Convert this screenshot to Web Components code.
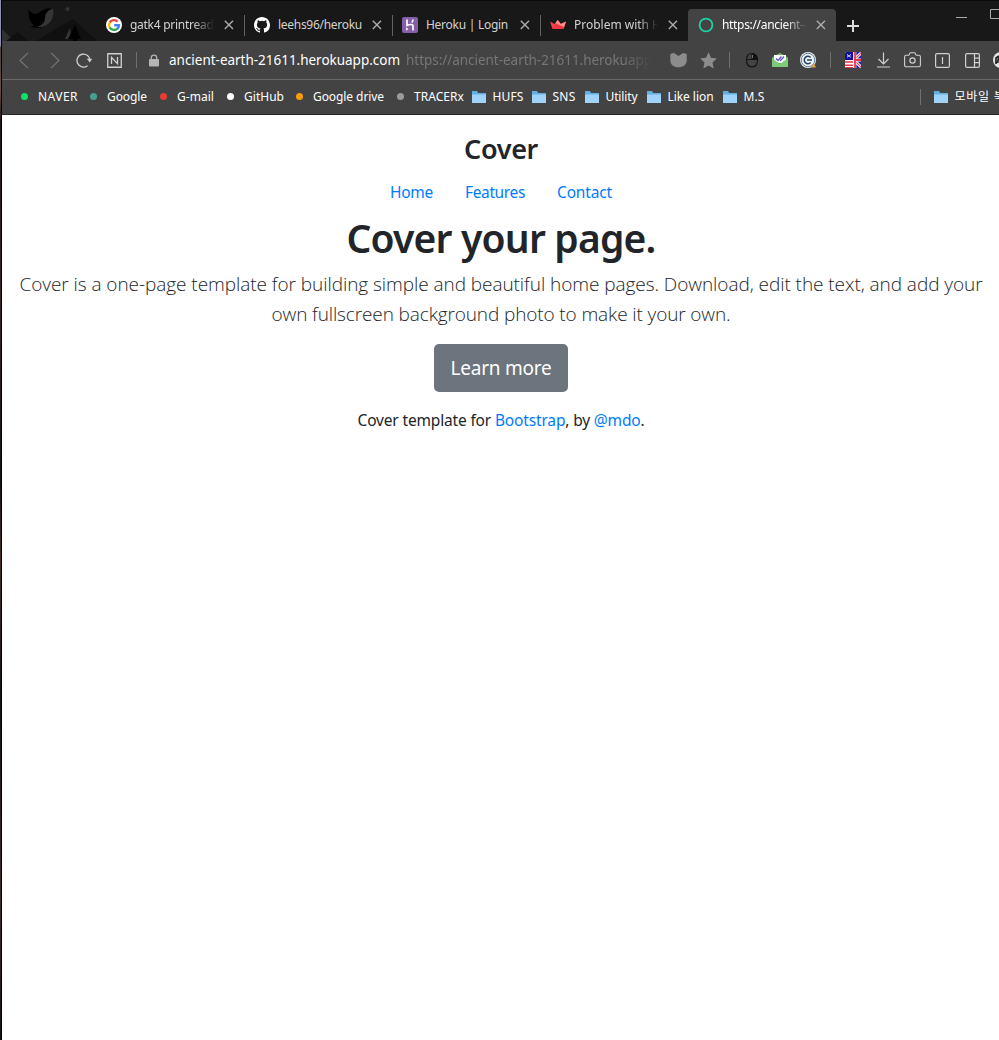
<!DOCTYPE html>
<html lang="en">
<head>
<meta charset="utf-8">
<title>Cover</title>
<style>
html,body{margin:0;height:100%;overflow:hidden;background:#fff}
body{font-family:"Noto Sans","Noto Sans CJK KR",sans-serif}
</style>
</head>
<body>
<browser-window></browser-window>
<script>
const def=(name,html,setup)=>customElements.define(name,class extends HTMLElement{
  connectedCallback(){
    if(this.shadowRoot)return;
    this.attachShadow({mode:'open'}).innerHTML=typeof html==='function'?html(this):html;
    if(setup)setup(this);
  }
});
const a=(el,n,d='')=>el.getAttribute(n)??d;

const icons={
google:[16,16,'<circle cx="8" cy="8" r="8" fill="#fff"/><g fill="none" stroke-width="2.4"><path d="M11.6 4.6A5 5 0 0 0 3.7 5.6" stroke="#ea4335"/><path d="M3.7 5.5a5 5 0 0 0 0 5" stroke="#fbbc05"/><path d="M3.7 10.4a5 5 0 0 0 7.7 1.3" stroke="#34a853"/><path d="M11.3 11.8A5 5 0 0 0 13 8.2H8.2" stroke="#4285f4"/></g>'],
github:[16,16,'<path fill="#fff" d="M8 0C3.58 0 0 3.58 0 8c0 3.54 2.29 6.53 5.47 7.59.4.07.55-.17.55-.38 0-.19-.01-.82-.01-1.49-2.01.37-2.53-.49-2.69-.94-.09-.23-.48-.94-.82-1.13-.28-.15-.68-.52-.01-.53.63-.01 1.08.58 1.23.82.72 1.21 1.87.87 2.33.66.07-.52.28-.87.51-1.07-1.78-.2-3.64-.89-3.64-3.95 0-.87.31-1.59.82-2.15-.08-.2-.36-1.02.08-2.12 0 0 .67-.21 2.2.82a7.6 7.6 0 0 1 4 0c1.53-1.04 2.2-.82 2.2-.82.44 1.1.16 1.92.08 2.12.51.56.82 1.27.82 2.15 0 3.07-1.87 3.75-3.65 3.95.29.25.54.73.54 1.48 0 1.07-.01 1.93-.01 2.2 0 .21.15.46.55.38A8.01 8.01 0 0 0 16 8c0-4.42-3.58-8-8-8z"/>'],
heroku:[16,16,'<rect width="16" height="16" rx="2" fill="#8560a8"/><path d="M5 2.6v5.8c2.2-1 6-1.6 6 .6v4.4M11 2.6c0 1.3-.5 2.2-1.3 3" fill="none" stroke="#fff" stroke-width="1.7"/><path d="M4.2 10.2 6.4 12l-2.2 1.8z" fill="#fff"/>'],
crown:[16,16,'<path d="M0 4.5 4.5 7 7.8 3l3 4L16 4.5 13.5 12H2.5z" fill="#f0434a"/><path d="m7.8 3 3 4L16 4.5 14 10.5 5.5 6z" fill="#ff8d88"/><path d="m5 7 9 3-.5 2H2.5z" fill="#ef3540"/>'],
ring:[16,16,'<circle cx="8" cy="8" r="6.4" fill="none" stroke="#1fd0a4" stroke-width="1.8"/>'],
close:[10,10,'<path d="m.8.8 8.2 8.2M9 .8.8 9" stroke="#adadad" stroke-width="1.4"/>'],
plus:[12,12,'<path d="M6 0v12M0 6h12" stroke="#dcdcdc" stroke-width="2"/>'],
min:[11,2,'<path d="M0 .5h11" stroke="#aaa"/>'],
max:[11,10,'<path d="M.5.5h10v9H.5z" fill="none" stroke="#aaa"/>'],
back:[10,17,'<path d="M9 .8 1 8.5 9 16.2" fill="none" stroke="#777" stroke-width="1.1"/>'],
fwd:[10,17,'<path d="m1 .8 8 7.7L1 16.2" fill="none" stroke="#777" stroke-width="1.1"/>'],
reload:[17,16,'<path d="M11.5 13.7A6.5 6.5 0 1 1 14 8.5" fill="none" stroke="#d0d0d0" stroke-width="1.3"/><path d="M10.800 6.800h5.400l-2.400 3.700z" fill="#d0d0d0"/>'],
naver:[15,15,'<path d="M.75.75h13.5v13.5H.75zM4.500 11V4.300l6 6.400V4" fill="none" stroke="#d0d0d0" stroke-width="1.3"/>'],
lock:[10,13,'<path d="M2.300 6V3.800a2.700 2.700 0 0 1 5.400 0V6" fill="none" stroke="#b4b4b4" stroke-width="1.3"/><rect y="5" width="10" height="7.500" rx="1" fill="#b4b4b4"/>'],
pocket:[17,15,'<path d="M.3 1 4 0l4.500 3L13 0l3.700 1v6.500c0 4-3.500 6.800-8.200 6.800S.3 11.500.3 7.500z" fill="#8c8c8c"/>'],
star:[17,17,'<path d="m8.500.3 2.500 5.500 5.800.7-4.300 4 1.200 5.900-5.200-3-5.200 3 1.200-5.900-4.300-4 5.800-.7z" fill="#8c8c8c"/>'],
mouse:[14,16,'<path d="M7 1.500C3.500 1.500 1.500 4 1.500 8s2 6.800 5.500 6.800 5.500-2.800 5.500-6.800S10.500 1.500 7 1.500zM1.500 7.500h11" fill="none" stroke="#151515" stroke-width="1.2"/><path d="M7 1.500c3.200 0 5.300 2.300 5.500 6H6.500v-6z" fill="#111"/><path d="M7.500 3v3" stroke="#777"/>'],
mail:[16,16,'<path d="M0 5.500 8 .7l8 4.800V15H0z" fill="#62b35e"/><path d="M2 3h12v8H2z" fill="#fff"/><path d="m0 6 8 6 8-6v7.500q0 1.500-1.500 1.500h-13Q0 15 0 13.500z" fill="#7dcb78"/><path d="m4 6.500 2 2 3.500-4M8 8l.7.500 3.300-4" fill="none" stroke="#5a50c8" stroke-width="1.2"/>'],
cext:[16,16,'<circle cx="8" cy="8" r="8" fill="#edf2f5"/><circle cx="8" cy="8" r="6.700" fill="none" stroke="#637f9c"/><path d="M10.700 5.500a3.700 3.700 0 1 0 0 5M7 8h5" fill="none" stroke="#25405f" stroke-width="1.500"/><path d="m11 14 3-3 2 4.500h-4z" fill="#d9a44c"/>'],
flag:[16,16,'<defs><clipPath id="r"><rect width="16" height="16" rx="1.500"/></clipPath></defs><g clip-path="url(#r)"><path fill="#fff" d="M0 0h16v16H0z"/><path d="M0 0h8.500v8H0z" fill="#10109c"/><path d="M0 10h8M0 13.200h8M0 15.800h8" stroke="#e8334a" stroke-width="1.500"/><path d="M9 0h7v16H9z" fill="#1e239f"/><path d="m9 8 8-8M9 8l8 8" stroke="#fff" stroke-width="3"/><path d="m9 8 8-8M9 8l8 8" stroke="#ef4660" stroke-width="1.200"/><path d="M8.500 8H16M9.800 0v16" stroke="#fff" stroke-width="3"/><path d="M9 8h7M10 0v16" stroke="#e8334a" stroke-width="1.800"/><path d="m2 2 4 4m0-4L2 6m0-2h4" stroke="#fff" stroke-width=".9" stroke-dasharray="1 .7"/></g>'],
down:[13,16,'<path d="M6.500.5V12M1.500 7l5 5 5-5M0 15h13" fill="none" stroke="#d0d0d0" stroke-width="1.2"/>'],
camera:[17,16,'<path d="M2.200 3.200h2.600l1.400-2.400h4.600l1.400 2.400h2.600q1.600 0 1.600 1.600v8.400q0 1.600-1.600 1.600H2.200Q.6 14.800.6 13.200V4.800q0-1.600 1.600-1.600z" fill="none" stroke="#d0d0d0" stroke-width="1.1"/><circle cx="8.500" cy="8.500" r="2.600" fill="none" stroke="#d0d0d0" stroke-width="1.2"/>'],
boxi:[15,15,'<rect x=".6" y=".6" width="13.800" height="13.800" rx="1.500" fill="none" stroke="#d0d0d0" stroke-width="1.2"/><path d="M7.500 4v7" stroke="#d0d0d0" stroke-width="1.2"/>'],
panel:[15,15,'<path d="M2 .6h11q1.400 0 1.400 1.400v11q0 1.400-1.400 1.400H2Q.6 14.400.6 13V2Q.6.6 2 .6zM9.500.6v13.800M9.500 5.200h5M9.500 9.700h5" fill="none" stroke="#d0d0d0" stroke-width="1.2"/>'],
profile:[16,16,'<circle cx="8" cy="8" r="8" fill="#e4e4e4"/><path d="M3 12V6l3-2M6 4 4.500 11" stroke="#222" stroke-width="1.700" fill="none"/>'],
folder:[14,12,'<path d="M0 0h5l1.200 2H14v10H0z" fill="#62aede"/><path d="M0 3.500h14V12H0z" fill="#9fd3fa"/>'],
whale:[96,41,'<path d="M0 27 14 41H0z" fill="#303030"/><path d="m6 41 12-9 10 9z" fill="#101010"/><path d="m41 38 18-11 14-8 24 22H36z" fill="#101010"/><path d="m70 28-5 11h6z" fill="#353535"/><path d="M75 25 68 39h5v3h4v-3h4z" fill="#000"/><path d="M28.500 9c2 4 6 6 10 4 5-4 11-6 13-4 3 5 2 10-2 14-5 5-12 6-19 4 1-1 3-1 3-2-4-3-5-9-5-16z" fill="#000"/><path d="M37 27c6-2 8-5 8-9 0-5 4-9 8-9 2 9-3 19-16 18z" fill="#353535"/><circle cx="67.500" cy="9" r="2" fill="#353535"/>']
};
def('ui-icon',el=>{const [w,h,s]=icons[a(el,'name')];
  return `<style>:host{display:block;flex:none;width:${w}px;height:${h}px}svg{display:block}</style><svg width="${w}" height="${h}" viewBox="0 0 ${w} ${h}">${s}</svg>`});

def('browser-tab',el=>`<style>
:host{display:flex;flex:none;box-sizing:border-box;width:148px;height:32px;align-items:center;padding-left:10px;border-radius:4px 4px 0 0;color:#d2d2d2;font-size:12px}
:host([active]){background:#434343;color:#fff}
.t{flex:none;width:84px;margin:0 10px 0 8px;overflow:hidden;white-space:nowrap;line-height:20px}
:host([fade]) .t{-webkit-mask:linear-gradient(90deg,#000 76%,transparent);mask:linear-gradient(90deg,#000 76%,transparent)}
i{flex:none;width:1px;height:21px;background:#626262;margin-left:10px}
:host([nosep]) i{display:none}
</style><ui-icon name="${a(el,'icon')}"></ui-icon><div class="t"><fit-text w="${a(el,'w')}"><slot></slot></fit-text></div><ui-icon name="close"></ui-icon><i></i>`);

def('tab-strip',`<style>
:host{display:flex;height:41px;box-sizing:border-box;background:#181818;border-top:1px solid #0a0a0a;align-items:flex-end;overflow:hidden}
.art{flex:none;width:94px;margin-top:-1px;overflow:hidden;height:41px}
.art ui-icon{margin-left:-2px}
.plus{margin:0 0 9px 11px}.min{margin:0 0 22px 97px}.max{margin:0 0 22px 23px}
</style><div class="art"><ui-icon name="whale"></ui-icon></div>
<browser-tab icon="google" fade w="89">gatk4 printreads</browser-tab>
<browser-tab icon="github" w="84">leehs96/heroku</browser-tab>
<browser-tab icon="heroku" w="82">Heroku | Login</browser-tab>
<browser-tab icon="crown" fade nosep w="87">Problem with H</browser-tab>
<browser-tab icon="ring" active fade nosep w="88">https://ancient-e</browser-tab>
<ui-icon class="plus" name="plus"></ui-icon><ui-icon class="min" name="min"></ui-icon><ui-icon class="max" name="max"></ui-icon>`);

const ic=(n,g)=>`<ui-icon name="${n}" style="margin-left:${g}px"></ui-icon>`;
const sp=g=>`<i style="margin-left:${g}px"></i>`;
def('tool-bar',`<style>
:host{display:flex;height:38px;background:#434343;align-items:center;overflow:hidden;color:#fff;border-bottom:1px solid #696969;white-space:nowrap}
i{flex:none;width:1px;height:16px;background:#6e6e6e}
.host{flex:none;width:231px;margin-left:10px;font-size:13.5px}
.url{flex:none;width:246px;margin-left:6px;color:#777;overflow:hidden;font-size:13.5px;-webkit-mask:linear-gradient(90deg,#000 88%,transparent);mask:linear-gradient(90deg,#000 88%,transparent)}
</style>${ic('back',17)}${ic('fwd',21)}${ic('reload',16)}${ic('naver',14)}${sp(14)}${ic('lock',12)}
<div class="host"><fit-text w="231">ancient-earth-21611.herokuapp.com</fit-text></div>
<div class="url"><fit-text w="246">https://ancient-earth-21611.herokuapp</fit-text></div>
${ic('pocket',18)}${ic('star',13)}${sp(12)}${ic('mouse',15)}${ic('mail',13)}${ic('cext',12)}${sp(14)}${ic('flag',14)}${ic('down',16)}${ic('camera',14)}${ic('boxi',14)}${ic('panel',15)}${ic('profile',13)}`);

def('book-mark',el=>`<style>
:host{display:flex;flex:none;align-items:center;margin-left:${a(el,'gap')}px}
b{flex:none;width:7px;height:7px;border-radius:50%;background:${a(el,'dot','none')};margin-right:10.5px}
ui-icon{margin-right:7px}
</style>${el.hasAttribute('dot')?'<b></b>':'<ui-icon name="folder"></ui-icon>'}<fit-text w="${a(el,'w')}"><slot></slot></fit-text>`);

def('bookmarks-bar',`<style>
:host{display:flex;height:33px;padding-bottom:1px;background:#434343;align-items:center;overflow:hidden;border-bottom:1px solid #252525;font-size:12px;color:#fff;white-space:nowrap;line-height:20px}
i{flex:none;width:1px;height:16px;background:#707070;margin-left:155px}
</style>
<book-mark gap="18.5" dot="#0be36a" w="40">NAVER</book-mark>
<book-mark gap="11.500" dot="#489d92" w="40">Google</book-mark>
<book-mark gap="12.500" dot="#e63c31" w="37">G-mail</book-mark>
<book-mark gap="12.500" dot="#fff" w="40">GitHub</book-mark>
<book-mark gap="11.500" dot="#fb9b0c" w="71">Google drive</book-mark>
<book-mark gap="12.500" dot="#9b9b9b" w="50">TRACERx</book-mark>
<book-mark gap="7.500" w="31">HUFS</book-mark>
<book-mark gap="8" w="23">SNS</book-mark>
<book-mark gap="9" w="32">Utility</book-mark>
<book-mark gap="9" w="46">Like lion</book-mark>
<book-mark gap="9" w="21">M.S</book-mark>
<i></i><book-mark gap="13" w="51">모바일 북</book-mark>`);

def('cover-page',`<style>
:host{display:flex;flex-direction:column;align-items:center;flex:1;background:#fff;color:#212529;font-size:15.5px;padding:17px 0 0 1px}
h1,h3,p{margin:0;font-weight:600;white-space:nowrap}
h3{font-size:27px;line-height:34px;margin-bottom:6px}
nav{display:flex;gap:32px;padding:8px 0;line-height:24px}
a{color:#007bff;text-decoration:none}
h1{font-size:39px;line-height:48px;margin:2px 0 7px}
.lead{font-family:"Open Sans","Noto Sans",sans-serif;font-size:19px;font-weight:300;line-height:30px}
.btn{display:flex;align-items:center;justify-content:center;width:134px;height:48px;border-radius:5px;background:#6c757d;color:#fff;font-size:19px;margin:15px 0 16px}
.foot{font-weight:400;line-height:24px}
</style>
<h3><fit-text w="74">Cover</fit-text></h3>
<nav><a><fit-text w="43">Home</fit-text></a><a><fit-text w="60">Features</fit-text></a><a><fit-text w="55">Contact</fit-text></a></nav>
<h1><fit-text w="309">Cover your page.</fit-text></h1>
<p class="lead"><fit-text w="963">Cover is a one-page template for building simple and beautiful home pages. Download, edit the text, and add your</fit-text></p>
<p class="lead"><fit-text w="459">own fullscreen background photo to make it your own.</fit-text></p>
<div class="btn"><fit-text w="101">Learn more</fit-text></div>
<p class="foot"><fit-text w="287">Cover template for <a>Bootstrap</a>, by <a>@mdo</a>.</fit-text></p>`);

def('browser-window',`<style>
:host{display:flex;height:1040px;width:999px;overflow:hidden}
.edge{flex:none;width:1px;border-right:1px solid #000;background:linear-gradient(#8d90b0 0 46px,#51433f 47px 60px,#6d4d43 90px,#1e1817 120px,#352724 300px,#171213 480px,#44302c 560px,#151112 700px,#3e2e2b 900px,#171213)}
main{flex:1;min-width:0;display:flex;flex-direction:column}
</style><div class="edge"></div><main><tab-strip></tab-strip><tool-bar></tool-bar><bookmarks-bar></bookmarks-bar><cover-page></cover-page></main>`);

/* Sets a run of text to a given width by spreading the difference over its letters. */
def('fit-text',el=>`<style>:host{display:block;flex:none;width:${a(el,'w')}px;white-space:pre}span{display:inline-block}</style><span><slot></slot></span>`,el=>{
  const s=el.shadowRoot.querySelector('span');
  let src=el.textContent;
  const slot=el.querySelector('slot');
  if(slot)src=slot.assignedNodes().map(n=>n.textContent).join('');
  s.style.letterSpacing=((+a(el,'w')-s.getBoundingClientRect().width)/src.length)+'px';
});
</script>
</body>
</html>
